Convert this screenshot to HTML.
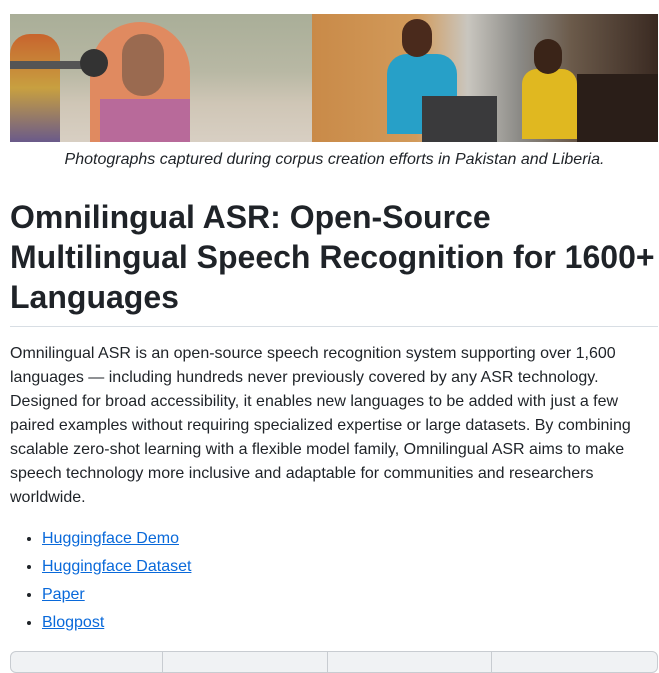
<!DOCTYPE html>
<html><head><style>
body{margin:0;background:#fff;font-family:"Liberation Sans",sans-serif;color:#1f2328;width:659px;height:659px;overflow:hidden;position:relative}
.img{position:absolute;left:10px;top:14px;width:648px;height:128px;display:flex}
.a{width:302px;height:128px;background:linear-gradient(180deg,#a9ae98 0%,#b8b8a4 45%,#cfc6b6 70%,#d8cfc3 100%);position:relative;overflow:hidden}
.b{flex:1;height:128px;background:linear-gradient(90deg,#c98a48 0%,#d29a5a 30%,#c9c6bf 45%,#8b8a86 60%,#6b5a4a 75%,#3a2a22 100%);position:relative;overflow:hidden}
.cap{position:absolute;top:151px;left:0;width:669px;text-align:center;font-style:italic;font-size:16px;color:#1f2328}
h1{position:absolute;top:197px;left:10px;margin:0;font-size:32px;line-height:40px;font-weight:bold;width:650px}
.hr{position:absolute;top:326px;left:10px;width:648px;height:1px;background:#d8dee4}
p{position:absolute;top:342px;left:10px;margin:0;width:645px;font-size:16px;line-height:24px}
ul{position:absolute;top:525px;left:0;margin:0;padding-left:42px;font-size:16px;line-height:28px}
a{color:#0969da;text-decoration:underline}
.tbl{position:absolute;top:651px;left:10px;width:646px;height:20px;border:1px solid #c8ccd1;border-radius:6px;background:#f0f2f4}
.tbl i{position:absolute;top:0;bottom:0;width:1px;background:#c8ccd1}
</style></head><body>
<div class="img">
 <div class="a">
  <div style="position:absolute;left:0;top:20px;width:50px;height:108px;background:linear-gradient(#c8642e,#c8a040,#6a5a8a);border-radius:20px 20px 0 0"></div>
  <div style="position:absolute;left:80px;top:8px;width:100px;height:120px;background:#e08a60;border-radius:50px 50px 0 0"></div>
  <div style="position:absolute;left:112px;top:20px;width:42px;height:62px;background:#9a6a50;border-radius:20px"></div>
  <div style="position:absolute;left:90px;top:85px;width:90px;height:43px;background:#b86a9a"></div>
  <div style="position:absolute;left:0;top:47px;width:95px;height:8px;background:#555"></div>
  <div style="position:absolute;left:70px;top:35px;width:28px;height:28px;background:#333;border-radius:50%"></div>
 </div>
 <div class="b">
  <div style="position:absolute;left:75px;top:40px;width:70px;height:80px;background:#27a0c8;border-radius:20px 20px 0 0"></div>
  <div style="position:absolute;left:90px;top:5px;width:30px;height:38px;background:#4a2a1c;border-radius:15px"></div>
  <div style="position:absolute;left:110px;top:82px;width:75px;height:46px;background:#3a3a3c"></div>
  <div style="position:absolute;left:210px;top:55px;width:55px;height:70px;background:#e0b820;border-radius:15px 15px 0 0"></div>
  <div style="position:absolute;left:222px;top:25px;width:28px;height:35px;background:#3a2418;border-radius:14px"></div>
  <div style="position:absolute;left:265px;top:60px;width:81px;height:68px;background:#2a1e18"></div>
 </div>
</div>
<div class="cap">Photographs captured during corpus creation efforts in Pakistan and Liberia.</div>
<h1>Omnilingual ASR: Open-Source<br>Multilingual Speech Recognition for 1600+<br>Languages</h1>
<div class="hr"></div>
<p>Omnilingual ASR is an open-source speech recognition system supporting over 1,600 languages — including hundreds never previously covered by any ASR technology. Designed for broad accessibility, it enables new languages to be added with just a few paired examples without requiring specialized expertise or large datasets. By combining scalable zero-shot learning with a flexible model family, Omnilingual ASR aims to make speech technology more inclusive and adaptable for communities and researchers worldwide.</p>
<ul>
<li><a>Huggingface Demo</a></li>
<li><a>Huggingface Dataset</a></li>
<li><a>Paper</a></li>
<li><a>Blogpost</a></li>
</ul>
<div class="tbl"><i style="left:151px"></i><i style="left:316px"></i><i style="left:480px"></i></div>
</body></html>
